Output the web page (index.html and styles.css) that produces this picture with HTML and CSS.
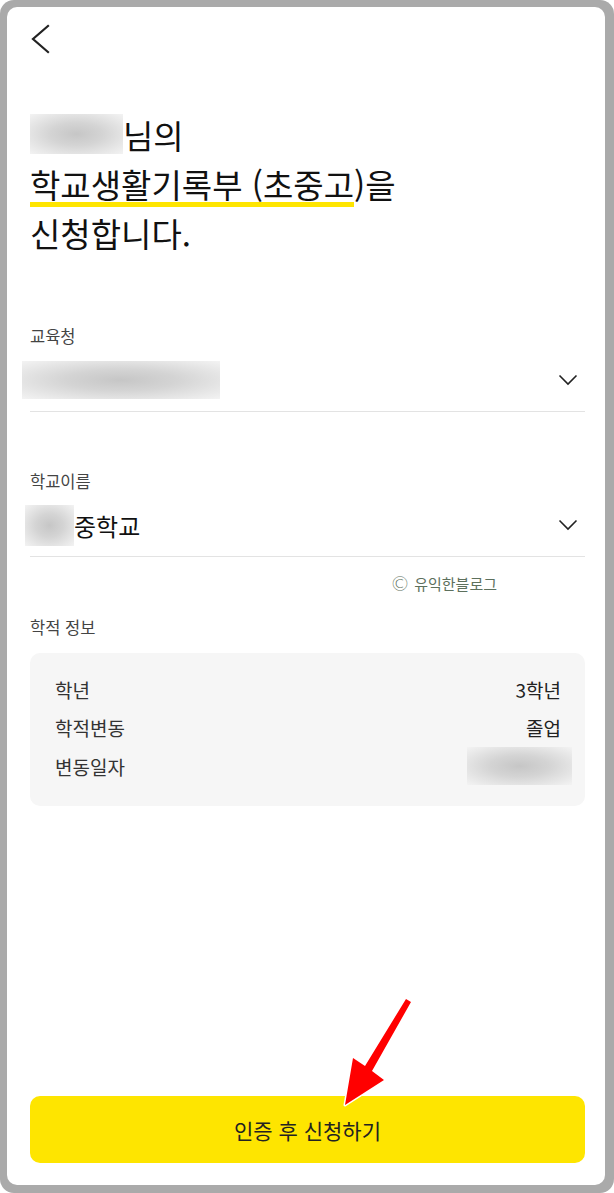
FILE: index.html
```html
<!DOCTYPE html>
<html lang="ko">
<head>
<meta charset="utf-8">
<title>학교생활기록부 신청</title>
<link rel="stylesheet" href="styles.css">
</head>
<body>
<div class="frame">
  <div class="screen">
    <header class="topbar">
      <button class="back" aria-label="뒤로">
        <svg width="20" height="30" viewBox="0 0 20 30"><path d="M17 2 L2 15 L17 28" fill="none" stroke="#222" stroke-width="2.2" stroke-linecap="square" stroke-linejoin="miter"/></svg>
      </button>
    </header>

    <h1 class="title"><span class="blur blur-name"></span>님의<br><span class="hl">학교생활기록부 (초중고</span>)을<br>신청합니다.</h1>

    <div class="field">
      <div class="label">교육청</div>
      <div class="select">
        <span class="blur blur-office"></span>
        <svg class="chev" width="20" height="12" viewBox="0 0 20 12"><path d="M1.5 1.5 L10 10 L18.5 1.5" fill="none" stroke="#222" stroke-width="1.6"/></svg>
      </div>
    </div>

    <div class="field field-gap">
      <div class="label">학교이름</div>
      <div class="select">
        <span class="value"><span class="blur blur-school"></span>중학교</span>
        <svg class="chev" width="20" height="12" viewBox="0 0 20 12"><path d="M1.5 1.5 L10 10 L18.5 1.5" fill="none" stroke="#222" stroke-width="1.6"/></svg>
      </div>
    </div>

    <div class="watermark"><span class="copy">©</span> 유익한블로그</div>

    <div class="section-label">학적 정보</div>
    <div class="info">
      <div class="info-row"><span class="k">학년</span><span class="v">3학년</span></div>
      <div class="info-row"><span class="k">학적변동</span><span class="v">졸업</span></div>
      <div class="info-row"><span class="k">변동일자</span><span class="blur blur-date"></span></div>
    </div>

    <button class="cta">인증 후 신청하기</button>
  </div>

  <svg class="arrow" width="90" height="125" viewBox="330 990 90 125">
    <path d="M406 999 L411 1002 L372 1071 L384 1080 L345 1105 L353 1058 L365 1066 Z" fill="#ff0000" stroke="#ffffff" stroke-width="3" stroke-linejoin="round" paint-order="stroke"/>
  </svg>
</div>
</body>
</html>
```

FILE: styles.css
```css
* { box-sizing: border-box; }

html, body {
  margin: 0;
  padding: 0;
  background: #ffffff;
}

body {
  font-family: "Noto Sans CJK KR", "Noto Sans", sans-serif;
  color: #111;
}

.frame {
  position: relative;
  width: 614px;
  height: 1193px;
  padding: 7px 9px 8px 7px;
  background: #aaaaaa;
  border-radius: 14px;
}

.screen {
  height: 100%;
  background: #ffffff;
  border-radius: 10px;
  display: flex;
  flex-direction: column;
  padding: 0 20px 22px 23px;
}

.topbar {
  padding-top: 17px;
  margin-left: 1px;
}

.back {
  display: block;
  border: 0;
  padding: 0;
  background: none;
  width: 20px;
  height: 30px;
}

.back svg { display: block; }

.title {
  margin: 57px 0 0;
  font-size: 33px;
  line-height: 49px;
  font-weight: 400;
  color: #111;
}

.hl {
  text-decoration: underline;
  text-decoration-color: #fee500;
  text-decoration-thickness: 5px;
  text-underline-offset: 4px;
  text-decoration-skip-ink: none;
}

.blur {
  display: inline-block;
  background: radial-gradient(ellipse at center, #c6c6c6 0%, #d4d4d4 40%, #e9e9e9 80%, #f3f3f3 100%);
}

.blur-name {
  width: 93px;
  height: 40px;
  vertical-align: -5px;
}

.field { margin-top: 68px; }
.field-gap { margin-top: 59px; }

.label,
.section-label {
  font-size: 16.5px;
  line-height: 20px;
  color: #444;
}

.select {
  margin-top: 12px;
  height: 54px;
  padding-bottom: 9px;
  border-bottom: 1px solid #e3e3e3;
  display: flex;
  align-items: center;
  justify-content: space-between;
}

.blur-office {
  width: 198px;
  height: 38px;
  margin-left: -8px;
}

.value {
  display: flex;
  align-items: center;
  font-size: 24px;
  color: #111;
}

.blur-school {
  width: 49px;
  height: 41px;
  margin-left: -5px;
}

.chev {
  display: block;
  margin-right: 7px;
}

.watermark {
  margin-top: 17px;
  margin-left: 360px;
  font-size: 15px;
  line-height: 20px;
  color: #5d705d;
}

.copy {
  font-size: 20px;
  font-family: "DejaVu Sans", sans-serif;
  font-weight: 300;
  vertical-align: -1px;
  line-height: 20px;
}

.section-label { margin-top: 23px; }

.info {
  margin-top: 16px;
  background: #f6f6f6;
  border-radius: 10px;
  padding: 17px 24px 20px 25px;
}

.info-row {
  display: flex;
  justify-content: space-between;
  align-items: center;
  height: 38.5px;
  font-size: 19px;
  color: #333;
}

.info-row .v { color: #222; }

.blur-date {
  width: 105px;
  height: 38px;
  margin-right: -11px;
}

.cta {
  margin-top: auto;
  height: 67px;
  width: 100%;
  border: 0;
  border-radius: 10px;
  background: #fee500;
  font-family: "Noto Sans CJK KR", "Noto Sans", sans-serif;
  font-size: 21px;
  color: #222;
}

.arrow {
  position: absolute;
  left: 330px;
  top: 990px;
}
```
